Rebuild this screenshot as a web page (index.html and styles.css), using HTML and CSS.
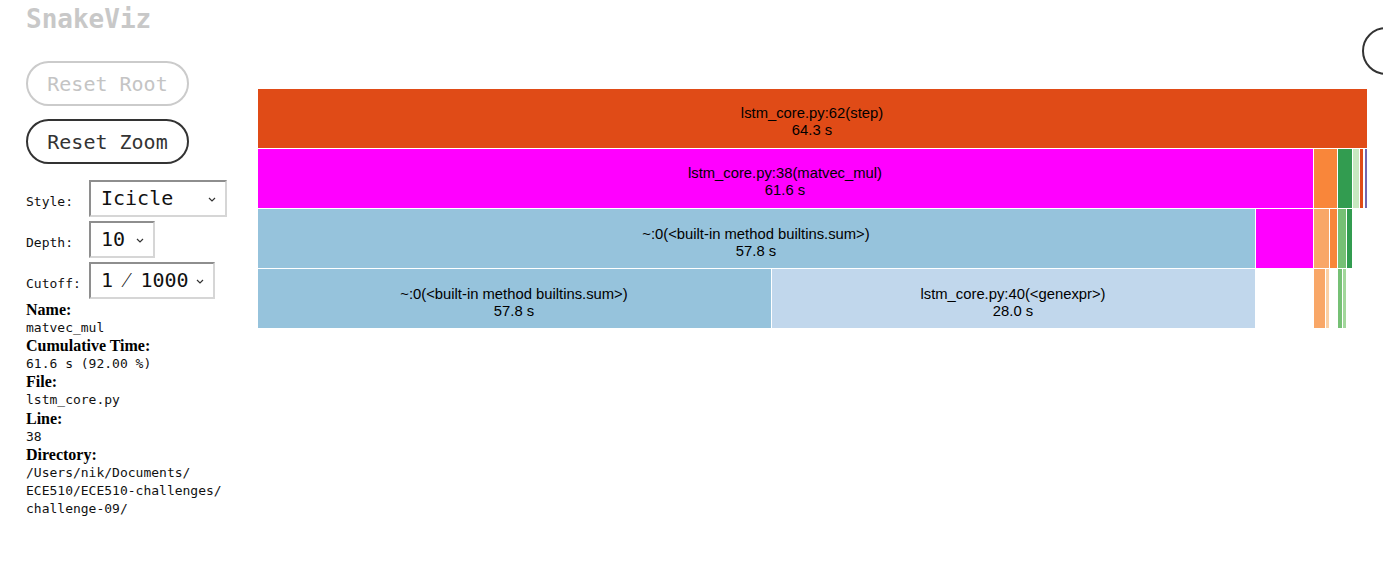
FILE: index.html
```html
<!DOCTYPE html>
<html>
<head>
<meta charset="utf-8">
<title>SnakeViz</title>
<link rel="stylesheet" href="styles.css">
</head>
<body>
<div class="page">
  <aside class="sidebar">
    <h1 class="title">SnakeViz</h1>
    <button class="btn btn-disabled">Reset Root</button>
    <button class="btn btn-active">Reset Zoom</button>
    <div class="controls">
      <label class="ctl-label">Style:</label>
      <div class="sel sel-style"><span class="sel-text">Icicle</span><svg class="chev" width="8" height="5" viewBox="0 0 8 5"><path d="M1 1 L4 4 L7 1" fill="none" stroke="#333" stroke-width="1.2"/></svg></div>
      <label class="ctl-label">Depth:</label>
      <div class="sel sel-depth"><span class="sel-text">10</span><svg class="chev" width="8" height="5" viewBox="0 0 8 5"><path d="M1 1 L4 4 L7 1" fill="none" stroke="#333" stroke-width="1.2"/></svg></div>
      <label class="ctl-label">Cutoff:</label>
      <div class="sel sel-cutoff"><span class="sel-text">1 ⁄ 1000</span><svg class="chev" width="8" height="5" viewBox="0 0 8 5"><path d="M1 1 L4 4 L7 1" fill="none" stroke="#333" stroke-width="1.2"/></svg></div>
    </div>
    <div class="info">
      <div class="info-key">Name:</div>
      <div class="info-val">matvec_mul</div>
      <div class="info-key">Cumulative Time:</div>
      <div class="info-val">61.6 s (92.00 %)</div>
      <div class="info-key">File:</div>
      <div class="info-val">lstm_core.py</div>
      <div class="info-key">Line:</div>
      <div class="info-val">38</div>
      <div class="info-key">Directory:</div>
      <div class="info-val dir">/Users/nik/Documents/<wbr>ECE510/<wbr>ECE510-challenges/<wbr>challenge-09/</div>
    </div>
  </aside>
  <main class="main">
    <svg class="chart" width="1112" height="242" viewBox="0 0 1112 242">
      <g stroke="#fff" stroke-width="1">
        <rect x="0.5" y="0.5" width="1110" height="60" fill="#e04b17"/>

        <rect x="0.5" y="60.5" width="1056" height="60" fill="#ff00ff"/>
        <rect x="1056.5" y="60.5" width="24" height="60" fill="#f9863a"/>
        <rect x="1080.5" y="60.5" width="15" height="60" fill="#329c50"/>
        <rect x="1095.5" y="60.5" width="7" height="60" fill="#c7e8c0"/>
        <rect x="1102.5" y="60.5" width="4" height="60" fill="#e04b17"/>
        <rect x="1106.5" y="60.5" width="1" height="60" fill="#ffffff"/>
        <rect x="1107.5" y="60.5" width="3" height="60" fill="#7267b0"/>

        <rect x="0.5" y="120.5" width="998" height="60" fill="#96c3dc"/>
        <rect x="998.5" y="120.5" width="58" height="60" fill="#ff00ff"/>
        <rect x="1056.5" y="120.5" width="16" height="60" fill="#f9a767"/>
        <rect x="1072.5" y="120.5" width="8" height="60" fill="#f9863a"/>
        <rect x="1080.5" y="120.5" width="9" height="60" fill="#76c075"/>
        <rect x="1089.5" y="120.5" width="6" height="60" fill="#329c50"/>

        <rect x="0.5" y="180.5" width="514" height="60" fill="#96c3dc"/>
        <rect x="514.5" y="180.5" width="484" height="60" fill="#c1d7ec"/>
        <rect x="1056.5" y="180.5" width="12" height="60" fill="#f9a767"/>
        <rect x="1068.5" y="180.5" width="4" height="60" fill="#fbd0a4"/>
        <rect x="1080.5" y="180.5" width="5" height="60" fill="#76c075"/>
        <rect x="1085.5" y="180.5" width="4" height="60" fill="#a2d79b"/>
      </g>
      <g class="labels" text-anchor="middle">
        <text x="555" y="30">lstm_core.py:62(step)</text>
        <text x="555" y="47">64.3 s</text>
        <text x="528" y="90">lstm_core.py:38(matvec_mul)</text>
        <text x="528" y="107">61.6 s</text>
        <text x="499" y="151">~:0(&lt;built-in method builtins.sum&gt;)</text>
        <text x="499" y="168">57.8 s</text>
        <text x="257" y="211">~:0(&lt;built-in method builtins.sum&gt;)</text>
        <text x="257" y="228">57.8 s</text>
        <text x="756" y="211">lstm_core.py:40(&lt;genexpr&gt;)</text>
        <text x="756" y="228">28.0 s</text>
      </g>
    </svg>
  </main>
</div>
<div class="corner-btn"></div>
</body>
</html>
```

FILE: styles.css
```css
html, body {
  margin: 0;
  padding: 0;
  background: #fff;
  overflow: hidden;
}

.page {
  display: flex;
  align-items: flex-start;
}

.sidebar {
  width: 205px;
  padding-left: 26px;
  display: flex;
  flex-direction: column;
  align-items: flex-start;
}

.title {
  margin: 4px 0 0 0;
  font-family: "DejaVu Sans Mono", monospace;
  font-weight: bold;
  font-size: 26px;
  line-height: 30px;
  color: #c8c8c8;
}

.btn {
  box-sizing: border-box;
  width: 163px;
  height: 45px;
  border-radius: 23px;
  border: 2px solid;
  background: #fff;
  font-family: "DejaVu Sans Mono", monospace;
  font-size: 20px;
  padding: 0;
}

.btn-disabled {
  margin-top: 27px;
  border-color: #cbcbcb;
  color: #c4c4c4;
}

.btn-active {
  margin-top: 13px;
  border-color: #333;
  color: #333;
}

.controls {
  margin-top: 16px;
  display: grid;
  grid-template-columns: 55px auto;
  column-gap: 8px;
  row-gap: 4px;
  align-items: end;
}

.ctl-label {
  font-family: "DejaVu Sans Mono", monospace;
  font-size: 13px;
  color: #111;
  padding-bottom: 8px;
}

.sel {
  box-sizing: border-box;
  height: 37px;
  border: 2px solid;
  border-color: #8e8e8e #d6d6d6 #d6d6d6 #8e8e8e;
  display: flex;
  align-items: center;
  justify-content: space-between;
  padding: 0 9px 0 10px;
  font-family: "DejaVu Sans Mono", monospace;
  font-size: 20px;
  color: #111;
  background: #fff;
}

.sel-style { width: 138px; }
.sel-depth { width: 66px; }
.sel-cutoff { width: 126px; }

.sel-text {
  line-height: 1;
  padding-bottom: 2px;
}

.chev {
  display: block;
  margin-top: 1px;
}

.info {
  margin-top: 2px;
  width: 205px;
  line-height: 18.1px;
}

.info-key {
  font-family: "Liberation Serif", serif;
  font-weight: bold;
  font-size: 16px;
  color: #000;
}

.info-val {
  font-family: "DejaVu Sans Mono", monospace;
  font-size: 13px;
  color: #111;
}

.main {
  padding-left: 26px;
  padding-top: 88px;
}

.chart {
  display: block;
}

.labels text {
  font-family: "Liberation Sans", Arial, sans-serif;
  font-size: 14.8px;
  fill: #000;
}

.corner-btn {
  position: absolute;
  left: 1362px;
  top: 27px;
  width: 44px;
  height: 44px;
  border: 2px solid #333;
  border-radius: 50%;
  background: #fff;
}
```
